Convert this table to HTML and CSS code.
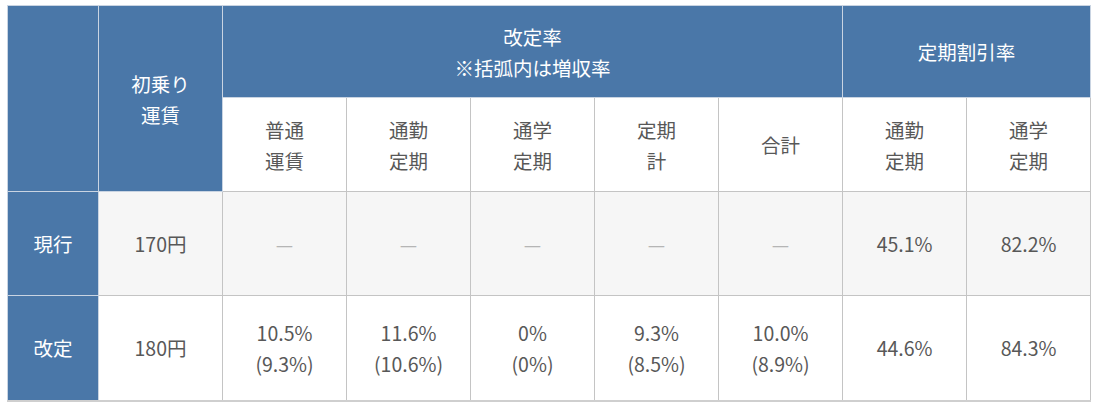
FILE: index.html
```html
<!DOCTYPE html>
<html lang="ja">
<head>
<meta charset="utf-8">
<link rel="stylesheet" href="styles.css">
</head>
<body>
<table class="fare">
  <colgroup>
    <col class="c-first">
    <col class="c-col"><col class="c-col"><col class="c-col"><col class="c-col">
    <col class="c-col"><col class="c-col"><col class="c-col"><col class="c-col">
  </colgroup>
  <thead>
    <tr class="h1">
      <th class="hd" rowspan="2"></th>
      <th class="hd" rowspan="2">初乗り<br>運賃</th>
      <th class="hd" colspan="5">改定率<br>※括弧内は増収率</th>
      <th class="hd" colspan="2">定期割引率</th>
    </tr>
    <tr class="h2">
      <th class="sub">普通<br>運賃</th>
      <th class="sub">通勤<br>定期</th>
      <th class="sub">通学<br>定期</th>
      <th class="sub">定期<br>計</th>
      <th class="sub">合計</th>
      <th class="sub">通勤<br>定期</th>
      <th class="sub">通学<br>定期</th>
    </tr>
  </thead>
  <tbody>
    <tr class="row row-cur">
      <th class="rh">現行</th>
      <td>170円</td>
      <td class="dash">—</td>
      <td class="dash">—</td>
      <td class="dash">—</td>
      <td class="dash">—</td>
      <td class="dash">—</td>
      <td>45.1%</td>
      <td>82.2%</td>
    </tr>
    <tr class="row row-new">
      <th class="rh">改定</th>
      <td>180円</td>
      <td>10.5%<br>(9.3%)</td>
      <td>11.6%<br>(10.6%)</td>
      <td>0%<br>(0%)</td>
      <td>9.3%<br>(8.5%)</td>
      <td>10.0%<br>(8.9%)</td>
      <td>44.6%</td>
      <td>84.3%</td>
    </tr>
  </tbody>
</table>
</body>
</html>
```

FILE: styles.css
```css
html, body {
  margin: 0;
  padding: 0;
  background: #ffffff;
}
body {
  padding: 5px 0 0 7px;
  font-family: "Noto Sans CJK JP", "Noto Sans", sans-serif;
  font-size: 19.5px;
  line-height: 31px;
  color: #585858;
}
.fare {
  border-collapse: collapse;
  table-layout: fixed;
  width: 1084px;
}
.c-first { width: 91px; }
.c-col { width: 124px; }
.fare th, .fare td {
  text-align: center;
  vertical-align: middle;
  padding: 0;
  font-weight: 400;
}
.hd {
  background: #4a77a8;
  color: #ffffff;
  font-weight: 500;
  border: 1px solid #c9d4e2;
}
.h1 { height: 92px; }
.h2 { height: 94px; }
.sub {
  background: #ffffff;
  color: #585858;
  border: 1px solid #c4c4c4;
}
.rh {
  background: #4a77a8;
  color: #ffffff;
  font-weight: 500;
  border: 1px solid #c9d4e2;
}
.row td {
  border: 1px solid #c4c4c4;
}
.row-cur { height: 104px; }
.row-cur td { background: #f6f6f6; }
.row-new { height: 105px; }
.row-new td { background: #ffffff; }
.dash { color: #b5b5b5; }
.fare tbody tr:last-child td { border-bottom: 2px solid #cfcfcf; }
.fare tbody tr:last-child th { border-bottom: 2px solid #cfcfcf; }
```
